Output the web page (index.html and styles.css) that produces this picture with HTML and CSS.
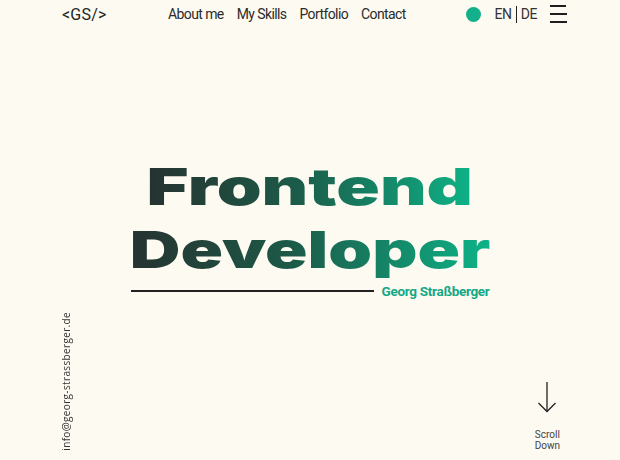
FILE: index.html
```html
<!DOCTYPE html>
<html lang="de">
<head>
<meta charset="utf-8">
<title>Georg Straßberger – Frontend Developer</title>
<link rel="stylesheet" href="styles.css">
</head>
<body>
<header class="topbar">
  <a class="logo" href="#">&lt;GS/&gt;</a>
  <nav class="nav">
    <a href="#">About me</a>
    <a href="#">My Skills</a>
    <a href="#">Portfolio</a>
    <a href="#">Contact</a>
  </nav>
  <div class="tools">
    <span class="dot"></span>
    <div class="lang"><span>EN</span><span class="sep"></span><span>DE</span></div>
    <button class="burger" aria-label="Menu"><i></i><i></i><i></i></button>
  </div>
</header>
<main class="hero">
  <h1 class="title">
    <span class="line"><span class="grad grad-front">Frontend</span></span>
    <span class="line"><span class="grad grad-dev">Developer</span></span>
  </h1>
  <div class="byline">
    <span class="rule"></span>
    <span class="name">Georg Straßberger</span>
  </div>
</main>
<footer class="bottom">
  <a class="mail" href="#">info@georg-strassberger.de</a>
  <div class="scroll">
    <svg class="arrow" width="20" height="32" viewBox="0 0 20 32" fill="none" stroke="#222" stroke-width="1.3">
      <path d="M10 1 V30.5"/>
      <path d="M1.5 22 L10 30.5 L18.5 22"/>
    </svg>
    <span class="scroll-text">Scroll<br>Down</span>
  </div>
</footer>
</body>
</html>
```
FILE: styles.css
```css
* { box-sizing: border-box; }
html, body { margin: 0; padding: 0; }
body {
  width: 620px;
  height: 460px;
  background: #fdfaf1;
  color: #2a2a2a;
  font-family: Roboto, "Liberation Sans", sans-serif;
  display: flex;
  flex-direction: column;
  overflow: hidden;
}
a { color: inherit; text-decoration: none; }

.topbar {
  height: 28px;
  display: flex;
  align-items: center;
  padding: 0 53px 0 62px;
}
.logo {
  font-size: 16px;
  color: #222;
  width: 106px;
  letter-spacing: 0.2px;
}
.nav {
  display: flex;
  gap: 13px;
  font-size: 14px;
  letter-spacing: -0.6px;
  color: #2b2b2b;
}
.tools {
  margin-left: auto;
  display: flex;
  align-items: center;
}
.dot {
  width: 15px;
  height: 15px;
  border-radius: 50%;
  background: #13b08b;
  margin-right: 13px;
}
.lang {
  display: flex;
  align-items: center;
  font-size: 14px;
  letter-spacing: -0.4px;
  color: #333;
  gap: 4px;
}
.sep {
  width: 1px;
  height: 17px;
  background: #222;
}
.burger {
  margin-left: 13px;
  width: 17px;
  height: 18px;
  padding: 0;
  border: 0;
  background: none;
  display: flex;
  flex-direction: column;
  justify-content: space-between;
}
.burger i {
  display: block;
  height: 2px;
  background: #1e1e1e;
}
.burger i:first-child { margin: 0 1px 0 0; }

.hero {
  padding-top: 127px;
  display: flex;
  flex-direction: column;
  align-items: center;
}
.title {
  margin: 0;
  font-family: Inter, "Liberation Sans", Arial, sans-serif;
  font-weight: 900;
  font-size: 51px;
  line-height: 63px;
  text-align: center;
}
.line {
  display: block;
}
.grad {
  display: inline-block;
  background: linear-gradient(90deg, #263230 0%, #1c5a48 45%, #0db387 100%);
  -webkit-background-clip: text;
  background-clip: text;
  color: transparent;
}
.grad-front { transform: scaleX(1.41); }
.grad-dev { transform: scaleX(1.375); }
.byline {
  width: 359px;
  margin-top: 2px;
  display: flex;
  align-items: center;
  gap: 8px;
}
.rule {
  flex: 1;
  height: 2px;
  background: #222;
}
.name {
  color: #13a887;
  font-weight: 700;
  font-size: 13.5px;
  letter-spacing: -0.3px;
}

.bottom {
  margin-top: auto;
  display: flex;
  justify-content: space-between;
  align-items: flex-end;
  padding: 0 60px 9px 59px;
}
.mail {
  writing-mode: vertical-rl;
  transform: rotate(180deg);
  font-family: "Open Sans", sans-serif;
  font-size: 10px;
  letter-spacing: 0.35px;
  color: #333;
  line-height: 14px;
}
.scroll {
  display: flex;
  flex-direction: column;
  align-items: center;
}
.arrow { display: block; margin-bottom: 16px; }
.scroll-text {
  font-size: 10px;
  line-height: 11px;
  color: #444;
  text-align: center;
}
```
